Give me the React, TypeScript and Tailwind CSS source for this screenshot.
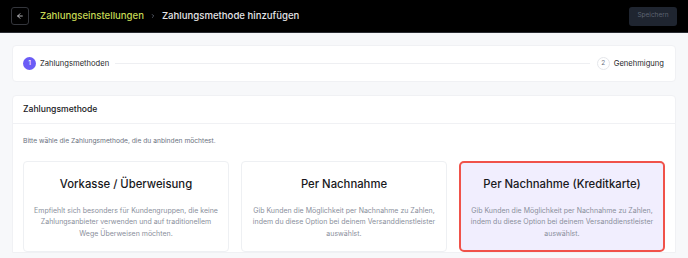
import React from "react";

function ArrowLeft() {
  return (
    <svg width="8" height="8" viewBox="0 0 24 24" fill="none" stroke="#d4d4d8" strokeWidth="2.5" strokeLinecap="round" strokeLinejoin="round">
      <path d="M19 12H5" />
      <path d="M12 19l-7-7 7-7" />
    </svg>
  );
}

function Chevron() {
  return (
    <svg width="6" height="6" viewBox="0 0 24 24" fill="none" stroke="#6b7280" strokeWidth="3" strokeLinecap="round" strokeLinejoin="round">
      <path d="M9 6l6 6-6 6" />
    </svg>
  );
}

const cards = [
  {
    title: "Vorkasse / Überweisung",
    desc: ["Empfiehlt sich besonders für Kundengruppen, die keine", "Zahlungsanbieter verwenden und auf traditionellem", "Wege Überweisen möchten."],
    selected: false,
  },
  {
    title: "Per Nachnahme",
    desc: ["Gib Kunden die Möglichkeit per Nachnahme zu Zahlen,", "indem du diese Option bei deinem Versanddienstleister", "auswählst."],
    selected: false,
  },
  {
    title: "Per Nachnahme (Kreditkarte)",
    desc: ["Gib Kunden die Möglichkeit per Nachnahme zu Zahlen,", "indem du diese Option bei deinem Versanddienstleister", "auswählst."],
    selected: true,
  },
];

export default function App() {
  return (
    <div className="w-[688px] h-[258px] overflow-hidden bg-[#f7f8fa]" style={{ fontFamily: "Inter, 'Noto Sans', sans-serif" }}>
      <header className="h-[33px] bg-black flex items-center justify-between px-[11px] border-b border-[#2a2d33]">
        <div className="flex items-center">
          <div className="w-[18px] h-[18px] border border-[#34363c] rounded-[3px] flex items-center justify-center">
            <ArrowLeft />
          </div>
          <span className="ml-[11px] text-[9.6px] font-medium text-[#c6d955] leading-none">Zahlungseinstellungen</span>
          <span className="mx-[6px] flex items-center"><Chevron /></span>
          <span className="text-[9.6px] font-medium text-[#e4e4e7] leading-none">Zahlungsmethode hinzufügen</span>
        </div>
        <div className="h-[19px] w-[48px] bg-[#1f2530] rounded-[3px] flex items-center justify-center text-[6.5px] text-[#5d6470]">
          Speichern
        </div>
      </header>

      <main className="px-[12px] pt-[12px]">
        <div className="h-[37px] bg-white rounded-[4px] border border-[#f0f1f4] flex items-center pl-[10px] pr-[11px]">
          <div className="w-[13px] h-[13px] rounded-full bg-[#6b5cf6] flex items-center justify-center text-[6.5px] text-white font-medium">1</div>
          <span className="ml-[4px] text-[7.6px] text-[#27272a]">Zahlungsmethoden</span>
          <div className="flex-1 h-px bg-[#eeeff2] ml-[6px] mr-[7px]" />
          <div className="w-[13px] h-[13px] rounded-full border border-[#e5e7eb] bg-white flex items-center justify-center text-[6.5px] text-[#6b7280]">2</div>
          <span className="ml-[4px] text-[7.6px] text-[#27272a]">Genehmigung</span>
        </div>

        <div className="mt-[13px] bg-white rounded-t-[4px] border border-[#f0f1f4]">
          <div className="h-[28px] flex items-center px-[10px] border-b border-[#f0f1f4]">
            <span className="text-[8.6px] font-medium text-[#18181b]">Zahlungsmethode</span>
          </div>
          <div className="px-[10px] pt-[11px]">
            <p className="text-[6.7px] text-[#6b7280] leading-[12px]">Bitte wähle die Zahlungsmethode, die du anbinden möchtest.</p>
            <div className="mt-[14px] grid grid-cols-3 gap-[12px]">
              {cards.map((c) => (
                <div
                  key={c.title}
                  className={
                    c.selected
                      ? "h-[91px] rounded-[5px] border-2 border-[#f0524a] bg-[#f1eefe] flex flex-col items-center pt-[14px]"
                      : "h-[91px] rounded-[4px] border border-[#eef0f3] bg-white flex flex-col items-center pt-[15px]"
                  }
                >
                  <div className="text-[11.3px] font-medium text-[#18181b] leading-[14px]">{c.title}</div>
                  <div className="mt-[14px] text-center text-[7px] text-[#8a8f9c] leading-[11.3px]">
                    {c.desc.map((l, i) => (
                      <div key={i}>{l}</div>
                    ))}
                  </div>
                </div>
              ))}
            </div>
          </div>
        </div>
      </main>
    </div>
  );
}
